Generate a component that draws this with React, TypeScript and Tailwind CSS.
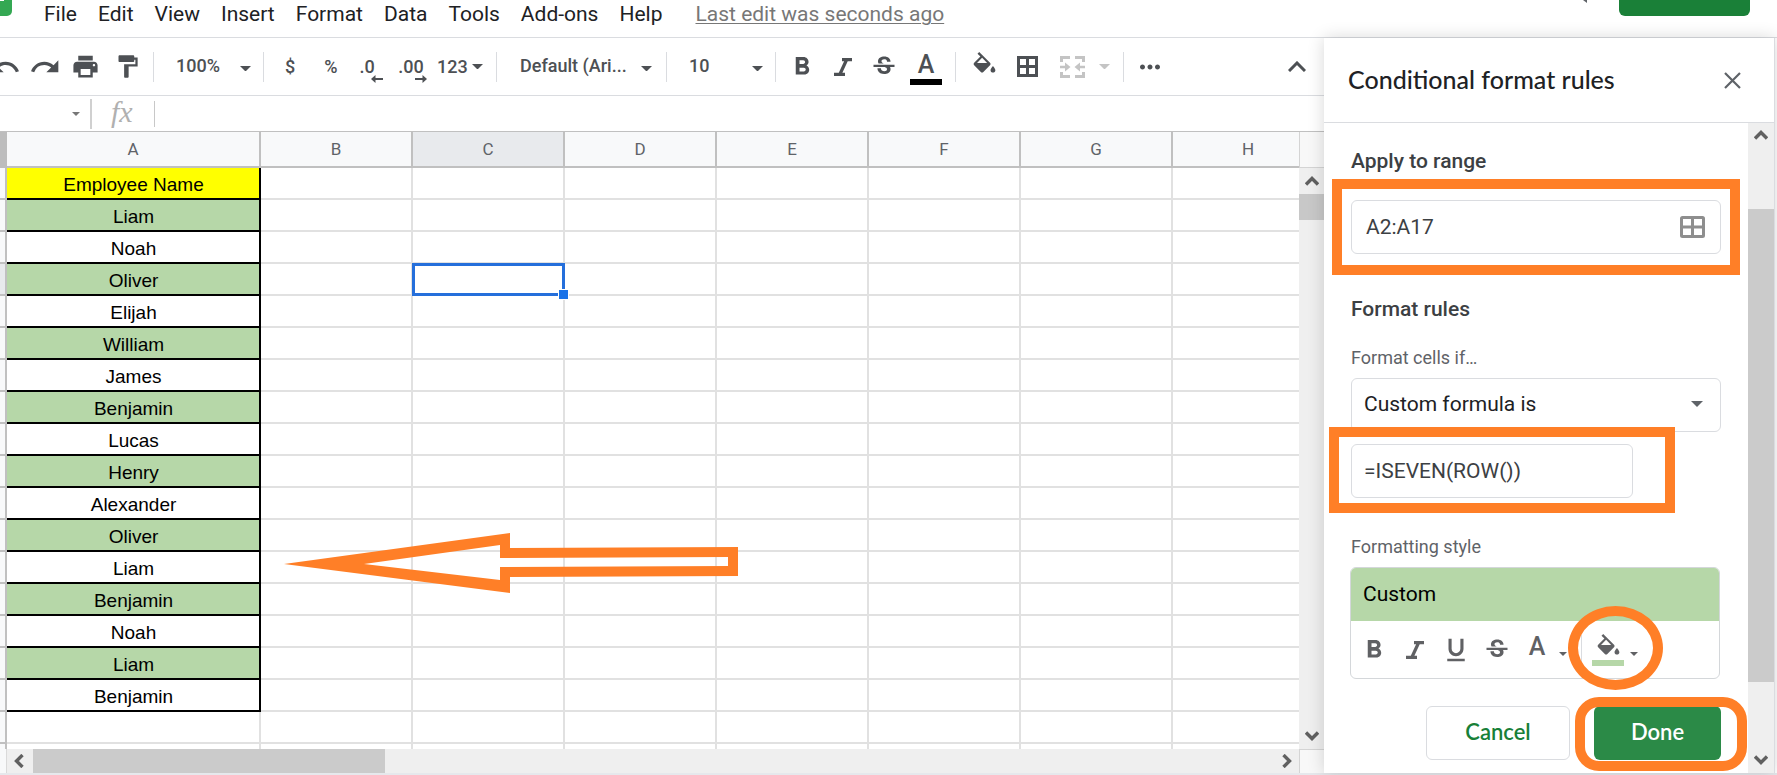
import type { ReactNode } from 'react';
import { MdFormatBold, MdFormatPaint, MdFormatUnderlined, MdMoreHoriz, MdPrint, MdRedo, MdStrikethroughS, MdUndo } from 'react-icons/md';

const MENUS = ['File', 'Edit', 'View', 'Insert', 'Format', 'Data', 'Tools', 'Add-ons', 'Help'];

const COLUMNS = ['B', 'C', 'D', 'E', 'F', 'G', 'H'];

const NAMES = [
  'Employee Name',
  'Liam',
  'Noah',
  'Oliver',
  'Elijah',
  'William',
  'James',
  'Benjamin',
  'Lucas',
  'Henry',
  'Alexander',
  'Oliver',
  'Liam',
  'Benjamin',
  'Noah',
  'Liam',
  'Benjamin',
];

// Last two rows are empty, the second one is cut off by the scrollbar
const ROWS = [...NAMES, '', ''];

const ACTIVE_ROW = 3;
const ACTIVE_COLUMN = 'C';

function Separator({ className = '' }: { className?: string }) {
  return <span className={`h-[30px] w-px shrink-0 bg-[#dadce0] ${className}`} />;
}

function ToolButton({ label, className, children }: { label: string; className: string; children: ReactNode }) {
  return (
    <button type="button" aria-label={label} className={`relative flex h-10 shrink-0 items-center justify-center ${className}`}>
      {children}
    </button>
  );
}

function Caret({ className = '', size = 11 }: { className?: string; size?: number }) {
  return (
    <svg width={size} height={size / 2} viewBox="0 0 10 5" className={`shrink-0 fill-current ${className}`}>
      <path d="M0 0h10L5 5z" />
    </svg>
  );
}

function ToolSelect({ label, value, className, caretClass }: { label: string; value: string; className: string; caretClass: string }) {
  return (
    <div className={`relative flex h-10 shrink-0 items-center pb-[2px] ${className}`}>
      <select aria-label={label} className="w-full appearance-none bg-transparent text-[18px] leading-6 font-medium outline-none">
        <option>{value}</option>
      </select>
      <Caret className={`pointer-events-none absolute top-[19px] ${caretClass}`} />
    </div>
  );
}

function ItalicIcon() {
  return (
    <svg width="18" height="18" viewBox="0 0 18 18" className="fill-none stroke-current stroke-[3.2]">
      <path d="M8 1.7h10M0 16.3h11M12.5 2 6 16" />
    </svg>
  );
}

function BucketIcon() {
  return (
    <svg width="29" height="29" viewBox="0 0 24 24" className="fill-current">
      <path d="M16.56 8.94 7.62 0 6.21 1.41l2.38 2.38-5.15 5.15a1.49 1.49 0 0 0 0 2.12l5.5 5.5c.29.29.68.44 1.06.44s.77-.15 1.06-.44l5.5-5.5c.59-.58.59-1.53 0-2.12zM5.8 9 10 4.8 14.2 9zM19 11.5s-2 2.17-2 3.5c0 1.1.9 2 2 2s2-.9 2-2c0-1.33-2-3.5-2-3.5z" />
    </svg>
  );
}

function BordersIcon() {
  return (
    <svg width="21" height="21" viewBox="0 0 21 21" className="fill-none stroke-current stroke-[3]">
      <path d="M1.5 1.5h18v18h-18zM10.5 1v19M1 10.5h19" />
    </svg>
  );
}

function MergeIcon() {
  return (
    <svg width="25" height="22" viewBox="0 0 25 22">
      <path d="M1.5 6V1.5H10M15 1.5h8.500V6M1.5 16v4.500H10M15 20.500h8.500V16" className="fill-none stroke-current stroke-[3]" />
      <path d="M0 9.700h5V6.500L10.500 11 5 15.500v-3.200H0zM25 9.700h-5V6.500L14.500 11l5.500 4.500v-3.200h5z" className="fill-current" />
    </svg>
  );
}

function Chevron({ className = '' }: { className?: string }) {
  return (
    <svg width="14" height="10" viewBox="0 0 14 10" className={`shrink-0 fill-none stroke-[#606060] stroke-[3.4] ${className}`}>
      <path d="m1 8.500 6-6 6 6" />
    </svg>
  );
}

function DecimalArrow({ className = '' }: { className?: string }) {
  return (
    <svg width="12" height="8" viewBox="0 0 12 8" className={`absolute fill-current ${className}`}>
      <path d="M0 4l4.500-4v3H12v2H4.500v3z" />
    </svg>
  );
}

function MenuBar() {
  return (
    <header className="flex h-[38px] shrink-0 items-start border-b border-[#dadce0] bg-white">
      <div className="h-4 w-3 shrink-0 rounded-br-[5px] bg-[#34a853]">
        <div className="h-px w-1 bg-white" />
      </div>
      <nav className="ml-8 flex gap-[21px] whitespace-nowrap text-[21px] leading-7 text-[#202124]">
        {MENUS.map((menu) => (
          <button key={menu} type="button">
            {menu}
          </button>
        ))}
        <a href="#history" className="ml-3 text-[#777] underline decoration-1 underline-offset-2">
          Last edit was seconds ago
        </a>
      </nav>
      <svg width="4" height="3" viewBox="0 0 4 3" className="mr-8 ml-auto shrink-0 fill-[#5f6368]">
        <path d="M0 0h4v3z" />
      </svg>
      <button type="button" aria-label="Share" className="mr-[27px] h-4 w-[131px] shrink-0 rounded-b-[6px] bg-[#1a8038]" />
    </header>
  );
}

function Toolbar() {
  return (
    <div className="-ml-[15px] flex h-[58px] shrink-0 items-center border-b border-[#dadce0] text-[18px] leading-6 font-medium text-[#4d5054]">
      <ToolButton label="Undo" className="w-10"><MdUndo size={32} /></ToolButton>
      <ToolButton label="Redo" className="w-10"><MdRedo size={32} /></ToolButton>
      <ToolButton label="Print" className="w-10"><MdPrint size={29} /></ToolButton>
      <ToolButton label="Paint format" className="w-11"><MdFormatPaint size={27} /></ToolButton>
      <Separator className="ml-1" />
      <ToolSelect label="Zoom" value="100%" className="w-[109px] pl-[22px]" caretClass="right-3" />
      <Separator />
      <ToolButton label="Format as currency" className="w-[52px]">$</ToolButton>
      <ToolButton label="Format as percent" className="w-[30px]">%</ToolButton>
      <ToolButton label="Decrease decimal places" className="w-[42px]">
        .0
        <DecimalArrow className="right-[5px] bottom-1" />
      </ToolButton>
      <ToolButton label="Increase decimal places" className="w-[46px]">
        .00
        <DecimalArrow className="right-[7px] bottom-1 rotate-180" />
      </ToolButton>
      <ToolButton label="More formats" className="w-[62px] justify-start gap-1 pl-[3px]">
        123
        <Caret />
      </ToolButton>
      <Separator />
      <ToolSelect label="Font" value="Default (Ari..." className="w-[169px] pl-[23px]" caretClass="right-[14px]" />
      <Separator />
      <ToolSelect label="Font size" value="10" className="w-[108px] pl-[22px]" caretClass="right-3" />
      <Separator className="mr-[6px]" />
      <ToolButton label="Bold" className="w-10"><MdFormatBold size={30} /></ToolButton>
      <ToolButton label="Italic" className="w-[42px]"><ItalicIcon /></ToolButton>
      <ToolButton label="Strikethrough" className="w-10"><MdStrikethroughS size={28} /></ToolButton>
      <ToolButton label="Text color" className="w-11 flex-col pt-[2px]">
        <span className="text-[25px] leading-7">A</span>
        <span className="h-[6px] w-8 bg-black" />
      </ToolButton>
      <Separator className="mr-[6px] ml-[7px]" />
      <ToolButton label="Fill color" className="w-11"><BucketIcon /></ToolButton>
      <ToolButton label="Borders" className="w-[42px]"><BordersIcon /></ToolButton>
      <ToolButton label="Merge cells" className="w-12 text-[#c4c4c4]"><MergeIcon /></ToolButton>
      <ToolButton label="Merge type" className="w-4 text-[#c4c4c4]"><Caret /></ToolButton>
      <Separator className="mr-[6px] ml-[11px]" />
      <ToolButton label="More" className="w-10"><MdMoreHoriz size={30} /></ToolButton>
      <ToolButton label="Hide the menus" className="mr-[7px] ml-auto w-10">
        <svg width="18" height="11" viewBox="0 0 18 11" className="fill-none stroke-current stroke-[3]">
          <path d="m1 10 8-8 8 8" />
        </svg>
      </ToolButton>
    </div>
  );
}

function FormulaBar() {
  return (
    <div className="flex h-9 shrink-0 items-center border-b border-[#c0c0c0]">
      <button type="button" aria-label="Name box" className="flex h-full w-[90px] items-center justify-end pr-[10px] text-[#777]">
        <Caret size={8} />
      </button>
      <span className="h-[30px] w-[2px] bg-[#d0d0d0]" />
      <span className="w-[62px] pb-1 pl-[19px] font-['Liberation_Serif',serif] text-[30px] leading-8 text-[#b0b0b0] italic">fx</span>
      <span className="h-[26px] w-px bg-[#c8c8c8]" />
      <input aria-label="Formula" className="h-8 min-w-0 flex-1 px-2 text-[18px] outline-none" />
    </div>
  );
}

function Sheet() {
  return (
    <div className="relative min-h-0 flex-1 overflow-hidden">
      <table className="w-[1325px] table-fixed border-separate border-spacing-0">
        <colgroup>
          <col className="w-[7px]" />
          <col className="w-[254px]" />
          {COLUMNS.map((column) => (
            <col key={column} className="w-[152px]" />
          ))}
        </colgroup>
        <thead>
          <tr className="h-9 text-[17px] leading-[34px] text-[#5f6368]">
            <th className="border-b-2 border-[#bdbdbd] bg-[#bdbdbd] p-0" />
            <th className="border-r-2 border-b-2 border-[#c0c0c0] bg-[#f8f9fa] p-0 font-normal">A</th>
            {COLUMNS.map((column) => (
              <th
                key={column}
                className={`border-r-2 border-b-2 border-[#c0c0c0] p-0 font-normal ${column === ACTIVE_COLUMN ? 'bg-[#e8eaed]' : 'bg-[#f8f9fa]'}`}
              >
                {column}
              </th>
            ))}
          </tr>
        </thead>
        <tbody>
          {ROWS.map((name, row) => (
            <tr key={row} className="h-8">
              <td className={`border-r-2 border-b-2 border-[#c0c0c0] p-0 ${row === ACTIVE_ROW ? 'bg-[#e8eaed]' : 'bg-[#f8f9fa]'}`} />
              <td
                className={`border-r-2 border-b-2 p-0 pt-1 pl-px text-center font-['Liberation_Sans',Arial,sans-serif] text-[19px] leading-[26px] text-black ${
                  name ? 'border-black' : 'border-[#e1e1e1]'
                } ${row === 0 ? 'bg-[#ffff00]' : name && row % 2 === 1 ? 'bg-[#b6d7a8]' : 'bg-white'}`}
              >
                {name}
              </td>
              {COLUMNS.map((column) => (
                <td key={column} className="relative border-r-2 border-b-2 border-[#e1e1e1] p-0">
                  {row === ACTIVE_ROW && column === ACTIVE_COLUMN && (
                    <div className="absolute -top-px -right-[2px] -bottom-[2px] -left-px z-10 border-[3px] border-[#256fdb]">
                      <div className="absolute -right-[7px] -bottom-[7px] box-content size-[9px] border border-white bg-[#1a73e8]" />
                    </div>
                  )}
                </td>
              ))}
            </tr>
          ))}
        </tbody>
      </table>
      <svg width="456" height="62" viewBox="0 0 456 62" className="absolute top-[400px] left-[284px] z-10 fill-[#ff7f27]">
        <path
          fillRule="evenodd"
          d="M0 32 226 1v15l228-1v29l-228 1v16zM80 32l136 16V35l228-1v-9l-228 1V13z"
        />
      </svg>
    </div>
  );
}

function SheetScrollbars({ children }: { children: ReactNode }) {
  return (
    <div className="flex min-h-0 flex-1">
      <div className="flex min-w-0 flex-1 flex-col">
        {children}
        <div className="flex h-6 shrink-0 items-center bg-[#efefef]">
          <span className="h-full w-[7px] border-r border-[#dadada] bg-[#f8f9fa]" />
          <span className="flex w-[26px] justify-center pr-[2px]">
            <Chevron className="-rotate-90" />
          </span>
          <span className="h-full w-[352px] bg-[#cbcbcb]" />
          <Chevron className="mr-[5px] ml-auto rotate-90" />
        </div>
      </div>
      <div className="flex w-[25px] shrink-0 flex-col items-center bg-[#efefef]">
        <span className="h-9 w-full shrink-0 border-b border-l border-[#d4d4d4] bg-[#f8f8f8]" />
        <span className="flex h-[26px] shrink-0 items-center">
          <Chevron />
        </span>
        <span className="h-[26px] w-full shrink-0 bg-[#c8c8c8]" />
        <Chevron className="mt-auto mb-2 rotate-180" />
        <span className="h-6 w-full shrink-0 border-t border-l border-[#d4d4d4] bg-[#f8f8f8]" />
      </div>
    </div>
  );
}

function RulesForm() {
  return (
    <form className="flex min-w-0 flex-1 flex-col px-[27px] pt-6 text-[21px] leading-7 text-[#3c4043]">
      <label htmlFor="range" className="font-medium">
        Apply to range
      </label>
      <div className="relative mt-[25px] flex h-[54px] shrink-0 items-center rounded-md border border-[#dadce0] pr-[15px] pl-[14px]">
        <input id="range" defaultValue="A2:A17" className="min-w-0 flex-1 outline-none" />
        <button type="button" aria-label="Select data range" className="text-[#8e8e8e]">
          <svg width="25" height="22" viewBox="0 0 25 22" className="fill-none stroke-current stroke-[3]">
            <rect x="1.500" y="1.500" width="22" height="19" rx="1" />
            <path d="M12.500 1v20M1 11h23" />
          </svg>
        </button>
        <div className="pointer-events-none absolute -inset-x-5 -inset-y-[22px] border-10 border-[#ff7f27]" />
      </div>

      <h3 className="mt-[41px] font-medium">Format rules</h3>
      <label htmlFor="condition" className="mt-[23px] text-[18px] leading-6 text-[#5f6368]">
        Format cells if…
      </label>
      <div className="relative mt-2 shrink-0">
        <select
          id="condition"
          className="h-[54px] w-full appearance-none rounded-md border border-[#dadce0] bg-white pb-[2px] pl-3 text-[#202124] outline-none"
        >
          <option>Custom formula is</option>
        </select>
        <Caret className="pointer-events-none absolute top-[23px] right-[18px] text-[#5f6368]" size={12} />
      </div>
      <div className="relative mt-3 h-[54px] w-[282px] shrink-0">
        <input
          aria-label="Value or formula"
          defaultValue="=ISEVEN(ROW())"
          className="size-full rounded-md border border-[#dadce0] bg-white pl-3 outline-none"
        />
        <div className="pointer-events-none absolute -top-[17px] -right-[42px] -bottom-[15px] -left-[22px] border-10 border-[#ff7f27]" />
      </div>

      <h4 className="mt-[37px] text-[18px] leading-6 text-[#5f6368]">Formatting style</h4>
      <div className="mt-2 mr-px -ml-px shrink-0 rounded-md border border-[#d4d7da]">
        <button type="button" className="block h-[53px] w-full rounded-t-[5px] bg-[#b6d7a8] pb-[2px] pl-3 text-left text-black">
          Custom
        </button>
        <div className="flex h-[57px] items-center pt-px pl-[2px] text-[#606164]">
          <ToolButton label="Bold" className="w-[41px]"><MdFormatBold size={30} /></ToolButton>
          <ToolButton label="Italic" className="w-[41px]"><ItalicIcon /></ToolButton>
          <ToolButton label="Underline" className="w-[41px]"><MdFormatUnderlined size={30} /></ToolButton>
          <ToolButton label="Strikethrough" className="w-[41px]"><MdStrikethroughS size={28} /></ToolButton>
          <ToolButton label="Text color" className="w-[64px] gap-[14px] pr-[2px]">
            <span className="pb-[6px] text-[25px] leading-6 font-medium">A</span>
            <Caret size={8} className="mt-2" />
          </ToolButton>
          <Separator />
          <ToolButton label="Fill color" className="w-[62px] justify-start pl-[10px]">
            <span className="flex w-8 flex-col items-center">
              <BucketIcon />
              <span className="-mt-[3px] h-[6px] w-full bg-[#b6d7a8]" />
            </span>
            <Caret size={8} className="mt-2 ml-[6px]" />
            <span className="pointer-events-none absolute -top-6 -left-[14px] h-[84px] w-[95px] rounded-[50%] border-10 border-[#ff7f27]" />
          </ToolButton>
        </div>
      </div>

      <div className="mt-[27px] flex shrink-0 justify-end gap-6 font-[Lato,sans-serif] text-[22px] font-semibold">
        <button type="button" className="h-[54px] w-[144px] rounded-md border border-[#dadce0] pb-[2px] text-[#188038]">
          Cancel
        </button>
        <button type="button" className="relative h-[54px] w-[127px] rounded-md bg-[#2b8a47] pb-[2px] text-white">
          Done
          <span className="pointer-events-none absolute -top-[9px] -right-[26px] -bottom-[11px] -left-[19px] rounded-3xl border-10 border-[#ff7f27]" />
        </button>
      </div>
    </form>
  );
}

function RulesPanel() {
  return (
    <aside className="relative z-20 mr-[2px] flex w-[451px] shrink-0 flex-col border-r border-[#dadce0] bg-white shadow-[0_0_16px_rgba(0,0,0,0.16)]">
      <div className="flex h-[85px] shrink-0 items-center justify-between border-b border-[#dadce0] pr-[33px] pl-6">
        <h2 className="pb-[2px] font-[Lato,sans-serif] text-[25px] leading-8 font-medium text-[#202124]">Conditional format rules</h2>
        <button type="button" aria-label="Close">
          <svg width="17" height="17" viewBox="0 0 17 17" className="fill-none stroke-[#5f6368] stroke-[2.2]">
            <path d="m1 1 15 15M16 1 1 16" />
          </svg>
        </button>
      </div>
      <div className="flex min-h-0 flex-1">
        <RulesForm />
        <div className="flex w-[26px] shrink-0 flex-col items-center bg-[#efefef]">
          <span className="flex h-6 shrink-0 items-center">
            <Chevron />
          </span>
          <span className="mt-[62px] h-[473px] w-full bg-[#cbcbcb]" />
          <Chevron className="mt-auto mb-2 rotate-180" />
        </div>
      </div>
    </aside>
  );
}

export default function App() {
  return (
    <div className="flex h-screen flex-col overflow-hidden bg-white font-[Roboto,sans-serif]">
      <MenuBar />
      <div className="flex min-h-0 flex-1">
        <main className="flex min-w-0 flex-1 flex-col">
          <Toolbar />
          <FormulaBar />
          <SheetScrollbars>
            <Sheet />
          </SheetScrollbars>
        </main>
        <RulesPanel />
      </div>
      <footer className="h-[2px] shrink-0 bg-[#e6e8ec]" />
    </div>
  );
}
